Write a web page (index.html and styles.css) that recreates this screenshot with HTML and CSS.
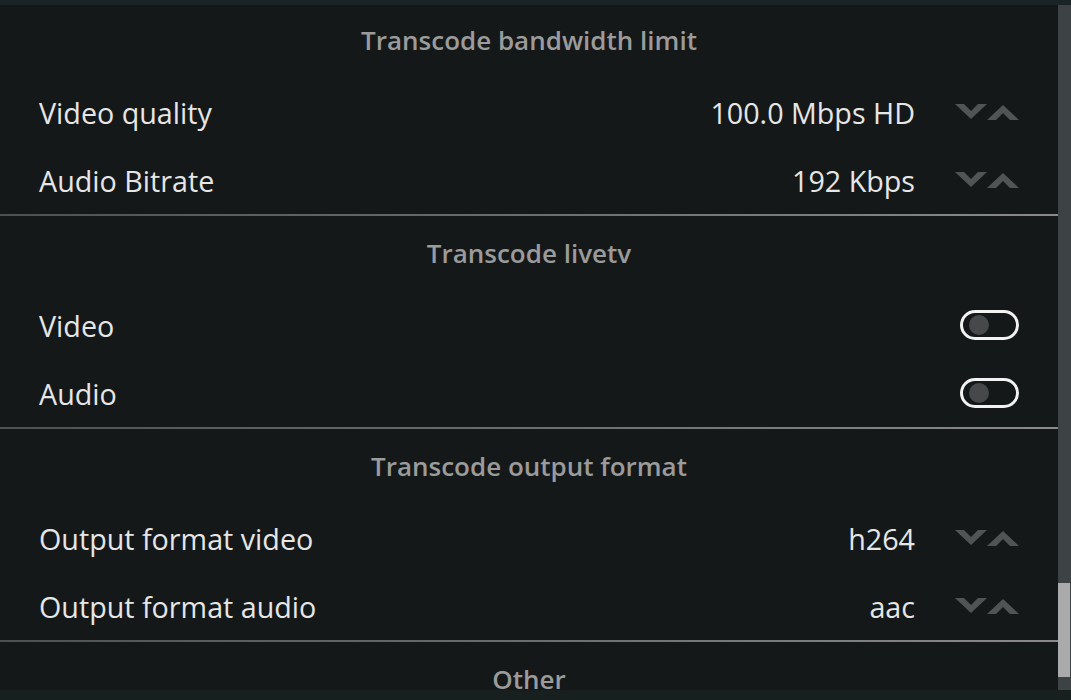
FILE: index.html
```html
<!DOCTYPE html>
<html lang="en">
<head>
    <meta charset="UTF-8">
    <meta name="viewport" content="width=device-width, initial-scale=1.0">
    <title>Transcode settings</title>
    <link rel="stylesheet" href="styles.css">
</head>
<body>
    <div id="app">
        <div class="topbar"></div>
        <div class="main">
            <div class="list">
                <div class="section first">
                    <div class="section-title">Transcode bandwidth limit</div>
                    <div class="row">
                        <span class="label">Video quality</span>
                        <span class="value">100.0 Mbps HD</span>
                        <span class="spinner">
                            <svg viewBox="0 0 32 16" width="32" height="16"><polygon points="0,0 9,0 16,7 23,0 32,0 16,15"/></svg>
                            <svg viewBox="0 0 32 16" width="32" height="16"><polygon points="0,16 16,1 32,16 23,16 16,9 9,16"/></svg>
                        </span>
                    </div>
                    <div class="row">
                        <span class="label">Audio Bitrate</span>
                        <span class="value">192 Kbps</span>
                        <span class="spinner">
                            <svg viewBox="0 0 32 16" width="32" height="16"><polygon points="0,0 9,0 16,7 23,0 32,0 16,15"/></svg>
                            <svg viewBox="0 0 32 16" width="32" height="16"><polygon points="0,16 16,1 32,16 23,16 16,9 9,16"/></svg>
                        </span>
                    </div>
                </div>

                <div class="section">
                    <div class="section-title">Transcode livetv</div>
                    <div class="row">
                        <span class="label">Video</span>
                        <span class="toggle"><span class="knob"></span></span>
                    </div>
                    <div class="row">
                        <span class="label">Audio</span>
                        <span class="toggle"><span class="knob"></span></span>
                    </div>
                </div>

                <div class="section">
                    <div class="section-title">Transcode output format</div>
                    <div class="row">
                        <span class="label">Output format video</span>
                        <span class="value">h264</span>
                        <span class="spinner">
                            <svg viewBox="0 0 32 16" width="32" height="16"><polygon points="0,0 9,0 16,7 23,0 32,0 16,15"/></svg>
                            <svg viewBox="0 0 32 16" width="32" height="16"><polygon points="0,16 16,1 32,16 23,16 16,9 9,16"/></svg>
                        </span>
                    </div>
                    <div class="row">
                        <span class="label">Output format audio</span>
                        <span class="value">aac</span>
                        <span class="spinner">
                            <svg viewBox="0 0 32 16" width="32" height="16"><polygon points="0,0 9,0 16,7 23,0 32,0 16,15"/></svg>
                            <svg viewBox="0 0 32 16" width="32" height="16"><polygon points="0,16 16,1 32,16 23,16 16,9 9,16"/></svg>
                        </span>
                    </div>
                </div>

                <div class="section">
                    <div class="section-title">Other</div>
                </div>
            </div>
            <div class="scrollbar">
                <div class="thumb"></div>
            </div>
        </div>
        <div class="bottombar"></div>
    </div>
</body>
</html>
```

FILE: styles.css
```css
html, body {
    margin: 0;
    padding: 0;
    height: 100%;
    background-color: #141819;
    font-family: "Open Sans", "Noto Sans", sans-serif;
    overflow: hidden;
}

#app {
    display: flex;
    flex-direction: column;
    width: 1071px;
    height: 700px;
}

.topbar {
    height: 5px;
    background-color: #1a2326;
}

.bottombar {
    height: 10px;
    background-color: #18201f;
}

.main {
    display: flex;
    height: 685px;
}

.list {
    flex: 1;
    overflow: hidden;
}

.section {
    height: 211px;
    border-bottom: 2px solid transparent;
    border-image: linear-gradient(to right, #4e5152, #8a8a8a) 1;
}

.section.first {
    margin-top: -2px;
}

.section-title {
    height: 75px;
    line-height: 75px;
    text-align: center;
    color: #9b9b9b;
    font-size: 26px;
    font-weight: 600;
}

.row {
    display: flex;
    align-items: center;
    height: 68px;
    padding: 0 39px;
    color: #e6e6e6;
    font-size: 28.7px;
}

.label {
    flex: 1;
}

.value {
    margin-right: 40px;
}

.spinner {
    display: flex;
    width: 64px;
    height: 16px;
}

.spinner svg {
    display: block;
    fill: #515455;
}

.toggle {
    display: flex;
    align-items: center;
    box-sizing: border-box;
    width: 59px;
    height: 30px;
    padding-left: 6px;
    border: 3px solid #f2f2f2;
    border-radius: 15px;
}

.knob {
    width: 20px;
    height: 20px;
    border-radius: 50%;
    background-color: #464849;
}

.scrollbar {
    width: 13px;
    background-color: #3d4345;
    padding-top: 578px;
    box-sizing: border-box;
}

.thumb {
    width: 12px;
    height: 94px;
    background-color: #aaaaaa;
}
```
